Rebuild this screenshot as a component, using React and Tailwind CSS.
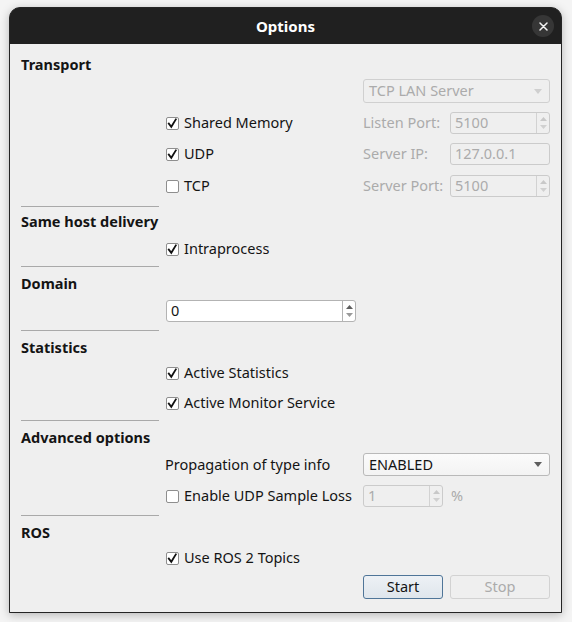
import React from "react";

function Check({ checked }) {
  return (
    <span className="w-[13px] h-[13px] shrink-0 border border-[#8e8e8e] bg-white rounded-[2px] flex items-center justify-center">
      {checked && (
        <svg width="11" height="11" viewBox="0 0 11 11">
          <path d="M1.8 5.6 L4.3 8.8 L8.8 1.4" fill="none" stroke="#111" strokeWidth="1.8" strokeLinecap="square" />
        </svg>
      )}
    </span>
  );
}

function CheckRow({ checked, label }) {
  return (
    <div className="flex items-center gap-[5px] h-[20px]">
      <Check checked={checked} />
      <span className="text-[14.5px] text-[#141414] whitespace-nowrap">{label}</span>
    </div>
  );
}

function Arrows({ disabled }) {
  const up = disabled ? "#c8c8c8" : "#5e5e5e";
  const dn = disabled ? "#d0d0d0" : "#9a9a9a";
  return (
    <div className={`w-[13px] h-full border-l ${disabled ? "border-[#d2d2d2]" : "border-[#b4b4b4]"} flex flex-col items-center justify-center gap-[4px]`}>
      <svg width="7" height="4" viewBox="0 0 7 4"><path d="M0 4 L3.5 0 L7 4 Z" fill={up} /></svg>
      <svg width="7" height="4" viewBox="0 0 7 4"><path d="M0 0 L3.5 4 L7 0 Z" fill={dn} /></svg>
    </div>
  );
}

function Spin({ value, disabled, w }) {
  return (
    <div
      className={`${w} h-[22px] rounded-[3px] border flex items-stretch ${
        disabled ? "border-[#cbcbcb] bg-[#efefef] text-[#ababab]" : "border-[#b3b3b3] bg-white text-[#141414]"
      }`}
    >
      <div className="flex-1 flex items-center pl-[4px] text-[14.5px]">{value}</div>
      <Arrows disabled={disabled} />
    </div>
  );
}

function Field({ value }) {
  return (
    <div className="w-[100px] h-[22px] rounded-[3px] border border-[#cbcbcb] bg-[#efefef] text-[#ababab] flex items-center pl-[4px] text-[14.5px]">
      {value}
    </div>
  );
}

function Combo({ value, disabled, h }) {
  return (
    <div
      className={`w-[187px] ${h} rounded-[3px] border flex items-center justify-between pl-[5px] pr-[7px] text-[14.5px] ${
        disabled
          ? "border-[#d0d0d0] bg-[#efefef] text-[#ababab]"
          : "border-[#b9b9b9] bg-gradient-to-b from-[#fbfbfb] to-[#f3f3f3] text-[#141414]"
      }`}
    >
      <span>{value}</span>
      <svg width="8" height="5" viewBox="0 0 8 5"><path d="M0 0 L4 5 L8 0 Z" fill={disabled ? "#cfcfcf" : "#5e5e5e"} /></svg>
    </div>
  );
}

function Header({ children, mt }) {
  return <div className={`${mt} h-[20px] flex items-center text-[14.5px] font-bold text-[#141414]`}>{children}</div>;
}

function Sep({ mt }) {
  return <div className={`${mt} w-[138px] h-[1px] bg-[#a9a9a9]`} />;
}

function Label({ children, disabled }) {
  return (
    <span className={`w-[87px] text-[14.5px] whitespace-nowrap ${disabled ? "text-[#ababab]" : "text-[#141414]"}`}>{children}</span>
  );
}

export default function App() {
  return (
    <div className="w-[572px] h-[622px] bg-[#f4f4f4] pt-[7px] pl-[9px] font-['Noto_Sans',sans-serif]">
      <div className="w-[553px] h-[606px] rounded-t-[11px] bg-[#202020] border border-[#252525] shadow-[0_2px_10px_rgba(0,0,0,0.25)] flex flex-col overflow-hidden">
        <div className="h-[36px] shrink-0 flex items-center justify-center relative">
          <span className="text-white font-bold text-[15px]">Options</span>
          <div className="absolute right-[7px] top-[7px] w-[22px] h-[22px] rounded-full bg-[#363636] flex items-center justify-center">
            <svg width="9" height="9" viewBox="0 0 9 9">
              <path d="M1 1 L8 8 M8 1 L1 8" stroke="#f2f2f2" strokeWidth="1.5" strokeLinecap="round" />
            </svg>
          </div>
        </div>
        <div className="flex-1 bg-[#efefef] pl-[11px] flex flex-col">
          <Header mt="mt-[11px]">Transport</Header>
          <div className="mt-[4px] h-[24px] flex pl-[342px]">
            <Combo value="TCP LAN Server" disabled h="h-[24px]" />
          </div>
          <div className="mt-[8px] h-[24px] flex items-center">
            <div className="w-[145px]" />
            <div className="w-[197px]"><CheckRow checked label="Shared Memory" /></div>
            <Label disabled>Listen Port:</Label>
            <Spin value="5100" disabled w="w-[100px]" />
          </div>
          <div className="mt-[7px] h-[24px] flex items-center">
            <div className="w-[145px]" />
            <div className="w-[197px]"><CheckRow checked label="UDP" /></div>
            <Label disabled>Server IP:</Label>
            <Field value="127.0.0.1" />
          </div>
          <div className="mt-[8px] h-[24px] flex items-center">
            <div className="w-[145px]" />
            <div className="w-[197px]"><CheckRow label="TCP" /></div>
            <Label disabled>Server Port:</Label>
            <Spin value="5100" disabled w="w-[100px]" />
          </div>
          <Sep mt="mt-[8px]" />
          <Header mt="mt-[5px]">Same host delivery</Header>
          <div className="mt-[7px] pl-[145px]"><CheckRow checked label="Intraprocess" /></div>
          <Sep mt="mt-[7px]" />
          <Header mt="mt-[7px]">Domain</Header>
          <div className="mt-[6px] pl-[145px]"><Spin value="0" w="w-[190px]" /></div>
          <Sep mt="mt-[8px]" />
          <Header mt="mt-[7px]">Statistics</Header>
          <div className="mt-[5px] pl-[145px]"><CheckRow checked label="Active Statistics" /></div>
          <div className="mt-[10px] pl-[145px]"><CheckRow checked label="Active Monitor Service" /></div>
          <Sep mt="mt-[7px]" />
          <Header mt="mt-[7px]">Advanced options</Header>
          <div className="mt-[5px] h-[23px] flex items-center">
            <div className="w-[144px]" />
            <span className="w-[198px] text-[14.5px] text-[#141414]">Propagation of type info</span>
            <Combo value="ENABLED" h="h-[23px]" />
          </div>
          <div className="mt-[9px] h-[22px] flex items-center">
            <div className="w-[145px]" />
            <div className="w-[197px]"><CheckRow label="Enable UDP Sample Loss" /></div>
            <Spin value="1" disabled w="w-[80px]" />
            <span className="ml-[8px] text-[14.5px] text-[#ababab]">%</span>
          </div>
          <Sep mt="mt-[8px]" />
          <Header mt="mt-[7px]">ROS</Header>
          <div className="mt-[5px] pl-[145px]"><CheckRow checked label="Use ROS 2 Topics" /></div>
          <div className="mt-[7px] flex pl-[342px] gap-[7px]">
            <div className="w-[80px] h-[24px] rounded-[3px] border border-[#4f7598] bg-gradient-to-b from-[#edf1f5] to-[#dfe6ec] flex items-center justify-center text-[14.5px] text-[#141414]">
              Start
            </div>
            <div className="w-[100px] h-[24px] rounded-[3px] border border-[#d2d2d2] bg-[#efefef] flex items-center justify-center text-[14.5px] text-[#ababab]">
              Stop
            </div>
          </div>
        </div>
      </div>
    </div>
  );
}
